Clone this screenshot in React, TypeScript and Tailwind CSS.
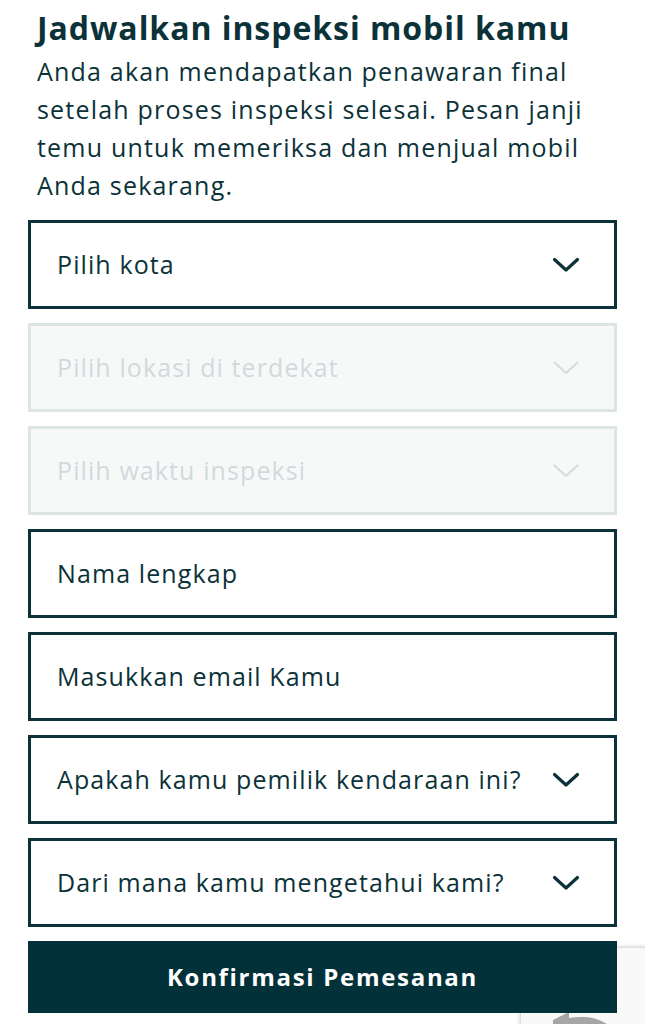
import type { ReactNode } from 'react'

const ink = 'text-[#0b3238]'

function Chevron({ muted = false }: { muted?: boolean }): ReactNode {
  return (
    <svg
      width="28"
      height="16"
      viewBox="0 0 28 16"
      fill="none"
      className="shrink-0"
    >
      <path
        d="M2.5 2.5 L14 13 L25.5 2.5"
        stroke={muted ? '#d5dcdf' : '#0b3238'}
        strokeWidth={muted ? 2.2 : 3.2}
        strokeLinecap="round"
        strokeLinejoin="round"
      />
    </svg>
  )
}

function Field({
  label,
  select = false,
  disabled = false,
}: {
  label: string
  select?: boolean
  disabled?: boolean
}): ReactNode {
  return (
    <div
      className={
        disabled
          ? 'flex h-[89px] items-center justify-between border-[3px] border-[#dde4e6] bg-[#f7f9f9] pl-[26px] pr-[34px]'
          : 'flex h-[89px] items-center justify-between border-[3px] border-[#0b3238] bg-white pl-[26px] pr-[34px]'
      }
    >
      <span
        className={
          disabled
            ? 'text-[25px] tracking-[1.1px] text-[#d2d9dc]'
            : `text-[25px] tracking-[1.1px] ${ink}`
        }
      >
        {label}
      </span>
      {select && <Chevron muted={disabled} />}
    </div>
  )
}

export default function App(): ReactNode {
  return (
    <div
      className="relative min-h-[1024px] overflow-hidden bg-white px-7"
      style={{ fontFamily: '"Open Sans", "Noto Sans", sans-serif' }}
    >
      {/* Heading */}
      <header className="px-[9px] pt-[6px]">
        <h1 className={`text-[32px] font-bold leading-[44px] tracking-[0.95px] ${ink}`}>
          Jadwalkan inspeksi mobil kamu
        </h1>
        <p className={`mt-[2px] pr-[10px] text-[25px] leading-[38px] tracking-[1.2px] ${ink}`}>
          Anda akan mendapatkan penawaran final setelah proses inspeksi selesai.
          Pesan janji temu untuk memeriksa dan menjual mobil Anda sekarang.
        </p>
      </header>

      {/* Form */}
      <form className="relative z-10 mt-[16px] flex flex-col gap-[14px]">
        <Field label="Pilih kota" select />
        <Field label="Pilih lokasi di terdekat" select disabled />
        <Field label="Pilih waktu inspeksi" select disabled />
        <Field label="Nama lengkap" />
        <Field label="Masukkan email Kamu" />
        <Field label="Apakah kamu pemilik kendaraan ini?" select />
        <Field label="Dari mana kamu mengetahui kami?" select />
        <button
          type="button"
          className="h-[72px] w-full bg-[#03313a] text-[24px] font-bold tracking-[1.7px] text-white"
        >
          Konfirmasi Pemesanan
        </button>
      </form>

      {/* reCAPTCHA badge peeking from below */}
      <div className="absolute left-[521px] top-[948px] h-[90px] w-[140px] bg-[#f9f9f9] shadow-[0_0_5px_rgba(0,0,0,0.3)]">
        <svg width="64" height="30" viewBox="0 0 64 30" className="absolute left-[28px] top-[62px]">
          <path d="M4 10 L20 2 L20 8 C32 6 46 6 58 14 L58 30 L4 30 Z" fill="#a6a6a6" />
        </svg>
      </div>
    </div>
  )
}
